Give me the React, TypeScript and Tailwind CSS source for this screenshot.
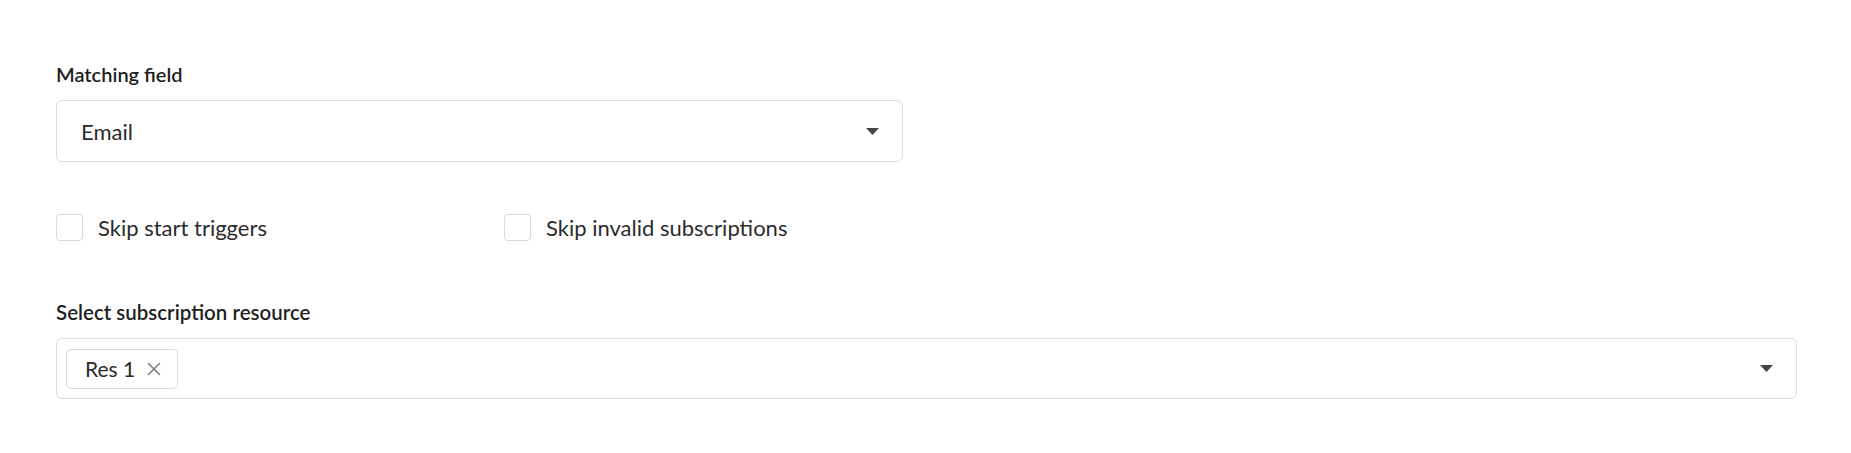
import { X } from 'lucide-react';

const font = { fontFamily: '"Lato", "Noto Sans", sans-serif' };

const Caret = () => (
    <svg width="13" height="7" viewBox="0 0 13 7" className="shrink-0">
        <path d="M0 0 L13 0 L6.5 7 Z" fill="#454545" />
    </svg>
);

const Checkbox = ({ label }: { label: string }) => (
    <label className="flex items-center gap-[15px] cursor-pointer">
        <span className="w-[27px] h-[27px] rounded-[4px] border border-[#d9d9d9] bg-white" />
        <span className="text-[22px] text-[#2b2b2b]">{label}</span>
    </label>
);

export default function App() {
    return (
        <div className="min-h-[453px] bg-white pl-[56px] pr-[54px] pt-[60px]" style={font}>
            <div className="text-[20px] font-semibold leading-[28px] text-[#1f1f1f]">Matching field</div>
            <div className="mt-[12px] w-[847px] h-[62px] rounded-[6px] border border-[#dcdcdc] flex items-center justify-between pl-[24px] pr-[23px]">
                <span className="text-[22px] text-[#2b2b2b]">Email</span>
                <Caret />
            </div>

            <div className="mt-[52px] flex items-center h-[27px]">
                <div className="w-[448px]">
                    <Checkbox label="Skip start triggers" />
                </div>
                <Checkbox label="Skip invalid subscriptions" />
            </div>

            <div className="mt-[57px] text-[20.5px] font-semibold leading-[28px] text-[#1f1f1f]">
                Select subscription resource
            </div>
            <div className="mt-[12px] h-[61px] rounded-[6px] border border-[#dcdcdc] flex items-center justify-between pl-[9px] pr-[23px]">
                <div className="h-[40px] rounded-[5px] border border-[#d9d9d9] flex items-center gap-[8px] pl-[18px] pr-[12px]">
                    <span className="text-[21px] text-[#2b2b2b]">Res 1</span>
                    <X size={22} strokeWidth={1.6} className="text-[#7a7a7a]" />
                </div>
                <Caret />
            </div>
        </div>
    );
}
